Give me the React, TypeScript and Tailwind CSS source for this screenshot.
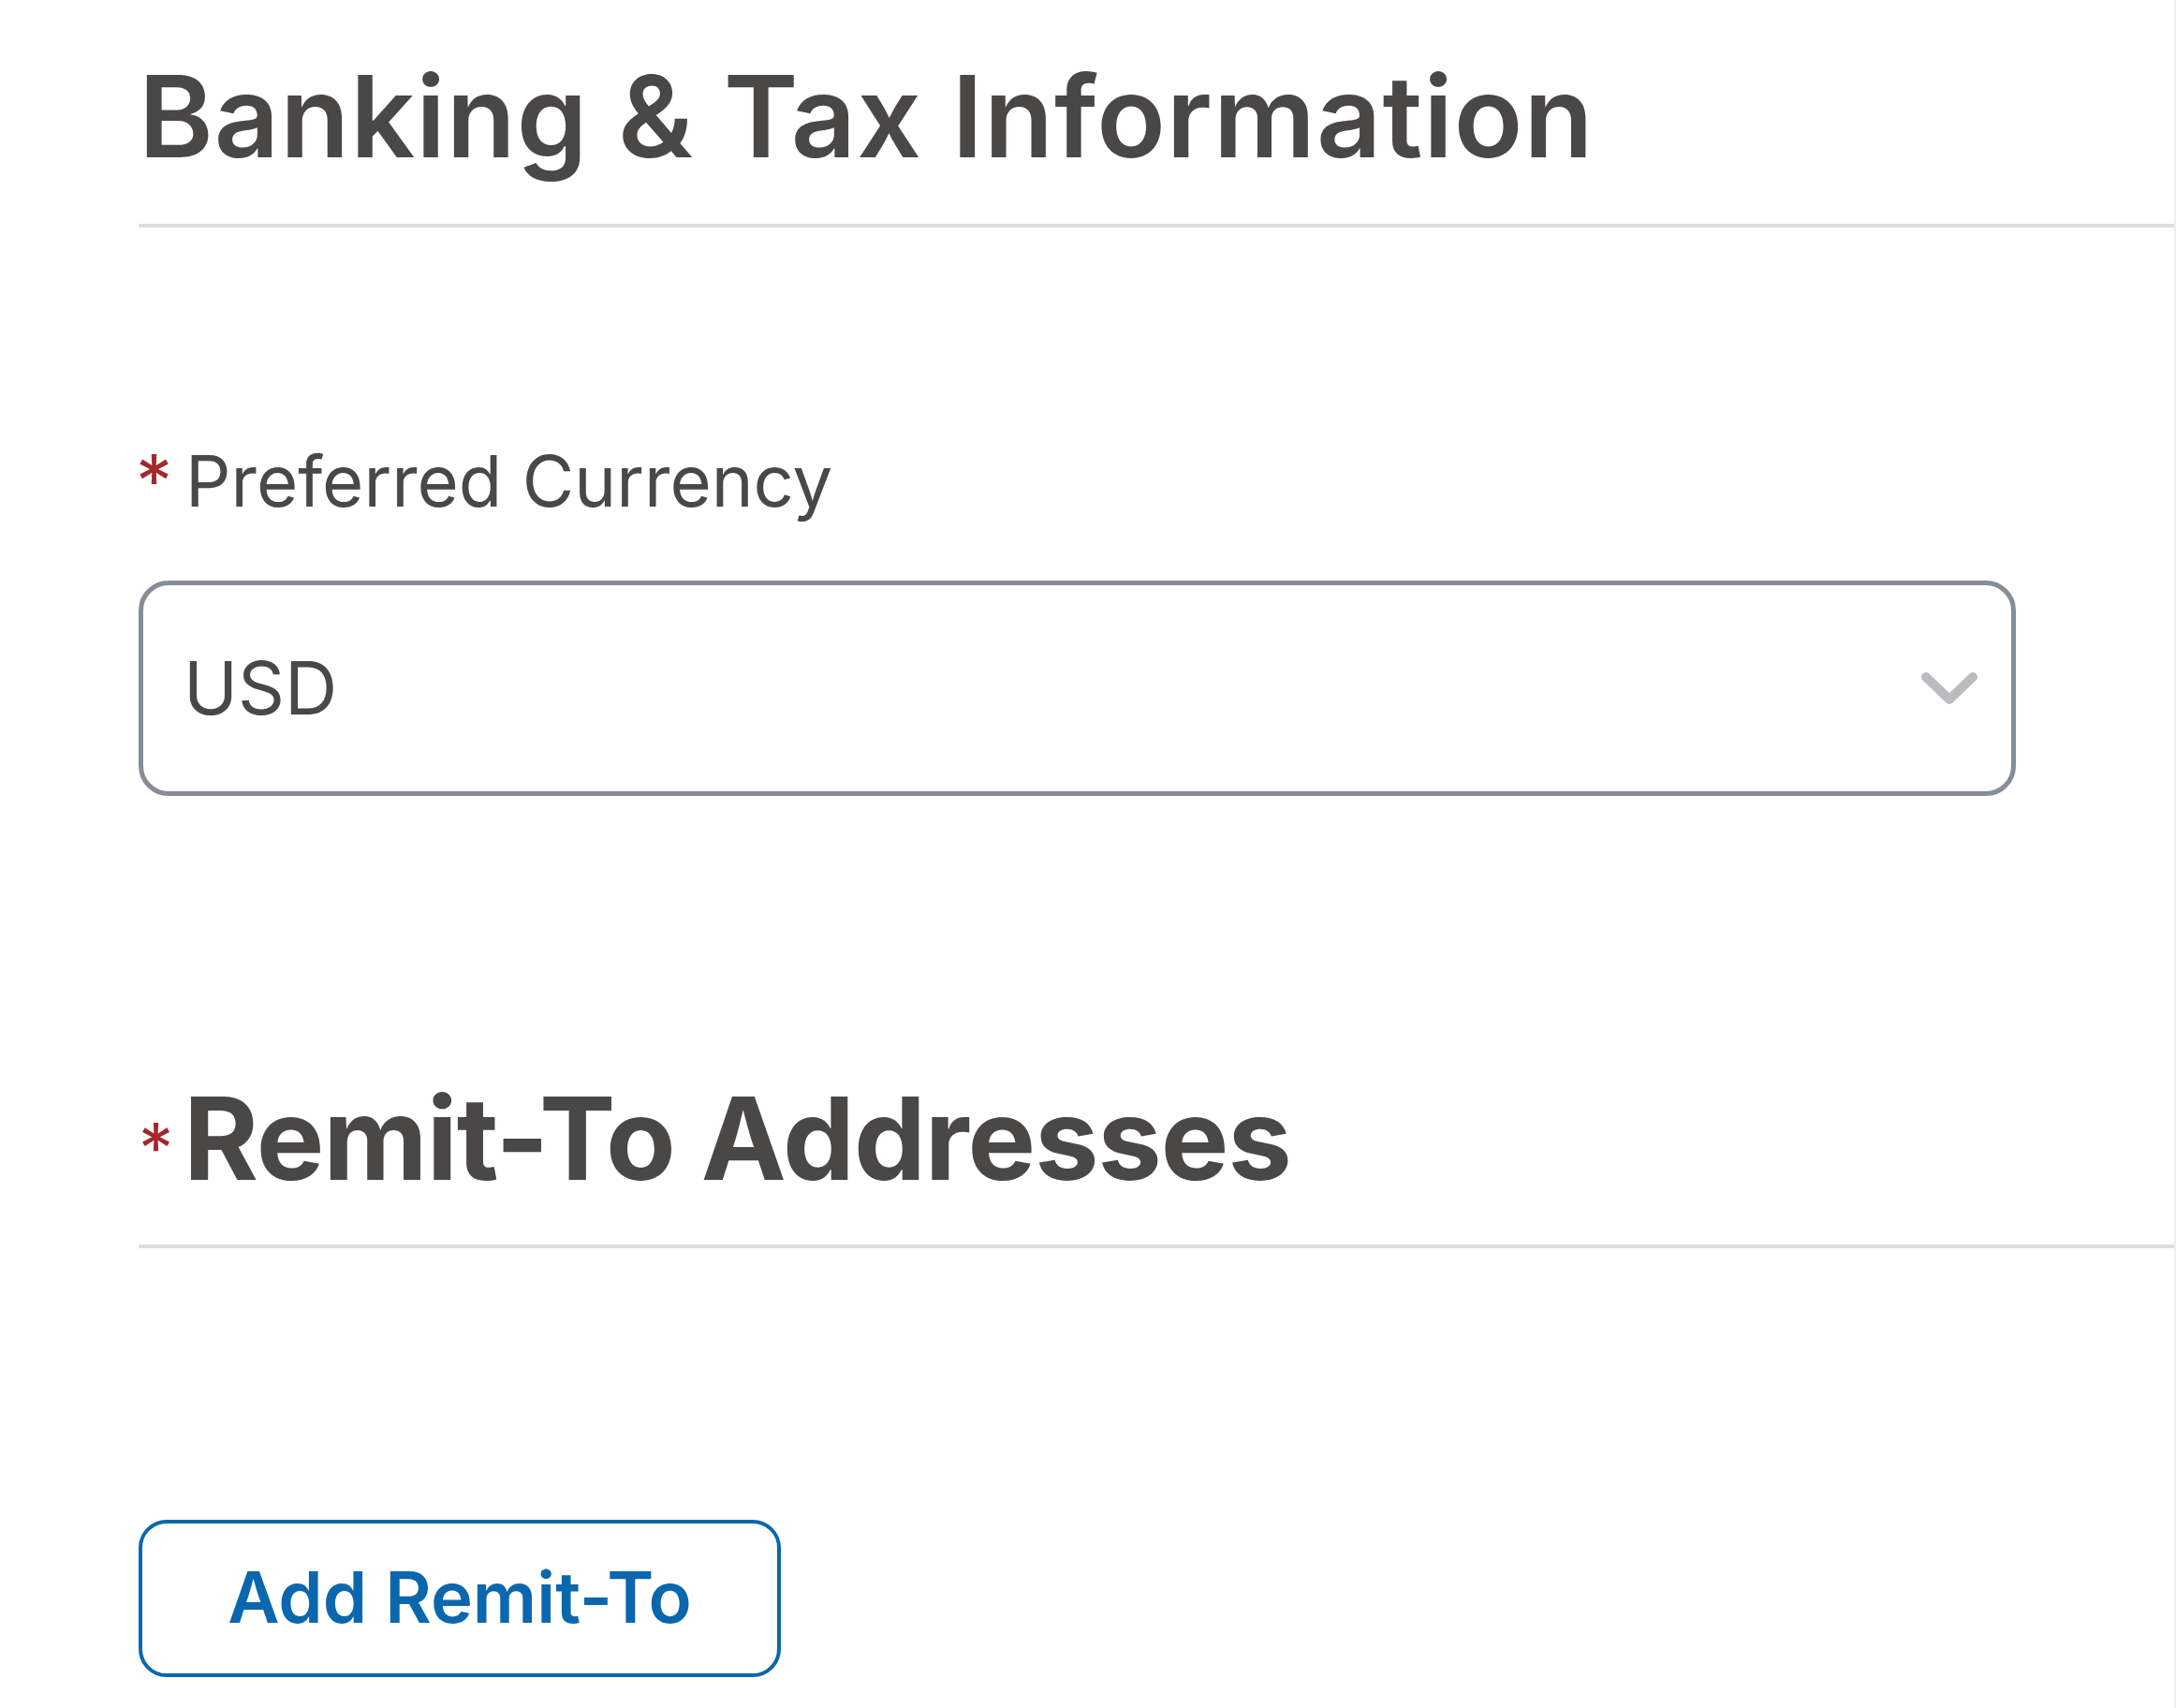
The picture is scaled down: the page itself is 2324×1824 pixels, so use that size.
const font = { fontFamily: '"Inter", "Liberation Sans", sans-serif' };

function Required({ className }: { className: string }) {
  return <span className={className}>*</span>;
}

export default function App() {
  return (
    <div
      className="min-h-[1824px] w-full bg-white text-[#4a4747] border-r-2 border-[#eeeff1]"
      style={font}
    >
      <div className="pl-[148px] pt-[64px] pb-[33px]">
        {/* Section: banking */}
        <h1 className="text-[121px] leading-none font-semibold tracking-[1px]">
          Banking &amp; Tax Information
        </h1>
        <div className="mt-[54px] h-[4px] bg-[#dcdee3]" />

        <div className="mt-[232px] flex items-start">
          <Required className="w-[50px] -ml-[3px] mr-[3px] text-[78px] leading-none text-[#a3282b]" />
          <span className="text-[76px] leading-none">Preferred Currency</span>
        </div>

        <div className="mt-[67px] w-[2005px] h-[230px] border-[5px] border-[#858d98] rounded-[32px] flex items-center justify-between pl-[43px] pr-[31px]">
          <span className="text-[78px] leading-none">USD</span>
          <svg width="70" height="48" viewBox="0 0 70 48">
            <path
              d="M10 12 L35 36 L60 12"
              fill="none"
              stroke="#bbbbc0"
              strokeWidth="10"
              strokeLinecap="round"
              strokeLinejoin="round"
            />
          </svg>
        </div>

        {/* Section: remit-to */}
        <div className="mt-[305px] flex items-start">
          <Required className="w-[48px] mt-[34px] text-[74px] leading-none text-[#a3282b]" />
          <h2 className="text-[122px] leading-none font-bold tracking-[-1px]">Remit-To Addresses</h2>
        </div>
        <div className="mt-[52px] h-[4px] bg-[#dcdee3]" />

        <button className="mt-[290px] w-[686px] h-[168px] border-[4px] border-[#0b67ad] rounded-[30px] bg-white text-[#0b67ad] text-[76px] leading-none font-semibold flex items-center justify-center pb-[4px]">
          Add Remit-To
        </button>
      </div>
    </div>
  );
}
